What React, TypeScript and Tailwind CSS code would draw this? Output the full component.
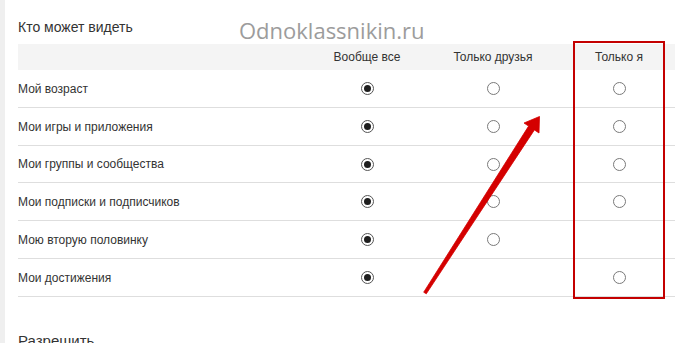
import React from 'react'

type Row = { label: string; checks: (boolean | null)[]; h: string }

const rows: Row[] = [
  { label: 'Мой возраст', checks: [true, false, false], h: 'h-[38px]' },
  { label: 'Мои игры и приложения', checks: [true, false, false], h: 'h-[38px]' },
  { label: 'Мои группы и сообщества', checks: [true, false, false], h: 'h-[37px]' },
  { label: 'Мои подписки и подписчиков', checks: [true, false, false], h: 'h-[38px]' },
  { label: 'Мою вторую половинку', checks: [true, false, null], h: 'h-[38px]' },
  { label: 'Мои достижения', checks: [true, null, false], h: 'h-[38px]' },
]

function Radio({ checked }: { checked: boolean }) {
  return (
    <span
      className={
        'flex h-[13px] w-[13px] items-center justify-center rounded-full border bg-white ' +
        (checked ? 'border-[#555]' : 'border-[#7a7a7a]')
      }
    >
      {checked && <span className="h-[7px] w-[7px] rounded-full bg-[#1e1e1e]" />}
    </span>
  )
}

export default function App() {
  return (
    <div className="relative flex h-[343px] w-[687px] overflow-hidden bg-white font-['Liberation_Sans',Arial,sans-serif] text-[#333]">
      <div className="w-[5px] shrink-0 bg-[#efefef]" />

      <div className="flex flex-col pl-[13px]">
        <div className="mt-[19px] text-[14px] leading-[16px]">Кто может видеть</div>

        <div className="mt-[9px] w-[657px]">
          {/* header */}
          <div className="grid h-[26px] grid-cols-[286px_126px_126px_126px] items-center bg-[#f4f4f4] text-[12px]">
            <div />
            <div className="text-center">Вообще все</div>
            <div className="text-center">Только друзья</div>
            <div className="text-center">Только я</div>
          </div>

          {rows.map((r) => (
            <div
              key={r.label}
              className={'grid grid-cols-[286px_126px_126px_126px] items-center border-b border-[#dedede] text-[12px] ' + r.h}
            >
              <div>{r.label}</div>
              {r.checks.map((c, i) => (
                <div key={i} className="flex justify-center">
                  {c !== null && <Radio checked={c} />}
                </div>
              ))}
            </div>
          ))}
        </div>

        <div className="mt-[35px] shrink-0 text-[15px] leading-[18px]">Разрешить</div>
      </div>

      {/* watermark */}
      <div className="pointer-events-none absolute left-[239px] top-[19px] font-['Open_Sans',sans-serif] text-[22px] leading-none text-[#9c9c9c]">
        Odnoklassnikin.ru
      </div>

      {/* red highlight box */}
      <div className="pointer-events-none absolute left-[573px] top-[41px] h-[258px] w-[92px] border-2 border-[#c40000]" />

      {/* red arrow */}
      <svg className="pointer-events-none absolute left-0 top-0" width="687" height="343" viewBox="0 0 687 343">
        <polygon
          points="423.7,292.2 528.6,126.1 524,123 539.5,116.5 539,133 534.4,129.9 426.3,293.8"
          fill="#d40000"
          stroke="#d40000"
          strokeWidth="0.8"
          strokeLinejoin="round"
        />
      </svg>
    </div>
  )
}
